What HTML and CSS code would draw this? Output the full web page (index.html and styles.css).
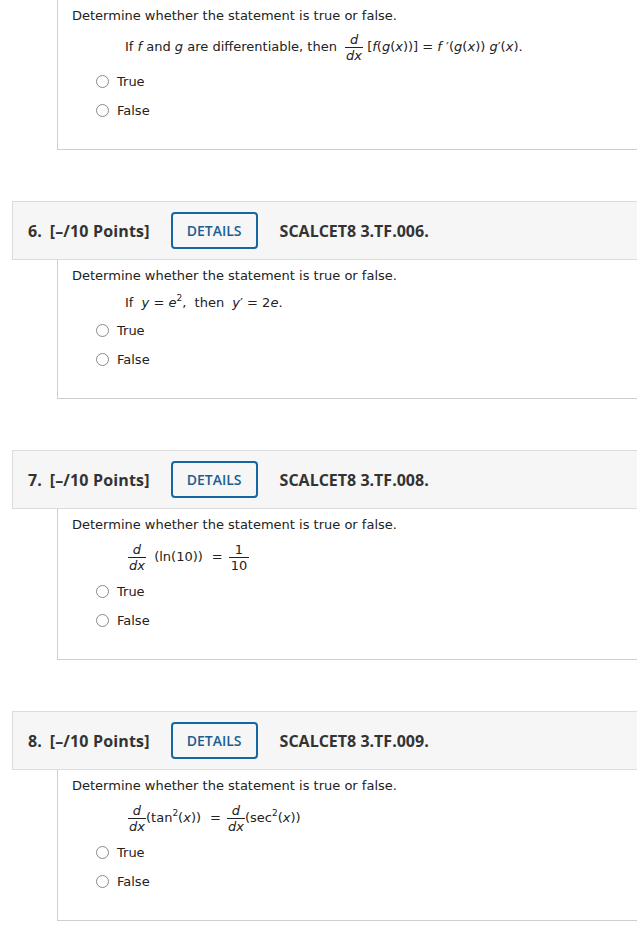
FILE: index.html
```html
<!DOCTYPE html>
<html>
<head>
<meta charset="utf-8">
<link rel="stylesheet" href="styles.css">
</head>
<body>
<div class="page">

  <section class="question first">
    <div class="qbody">
      <p class="prompt">Determine whether the statement is true or false.</p>
      <div class="statement"><span class="expr">If <i>f</i> and <i>g</i> are differentiable, then <span class="frac gap"><span class="num"><i>d</i></span><span class="den"><i>dx</i></span></span> [<i>f</i>(<i>g</i>(<i>x</i>))] = <i>f</i> ′(<i>g</i>(<i>x</i>)) <i>g</i>′(<i>x</i>).</span></div>
      <div class="options">
        <label class="opt"><span class="radio"></span>True</label>
        <label class="opt"><span class="radio"></span>False</label>
      </div>
    </div>
  </section>

  <section class="question">
    <div class="qhead">
      <span class="qnum">6.</span>
      <span class="qpts">[–/10 Points]</span>
      <button class="details">DETAILS</button>
      <span class="qcode">SCALCET8 3.TF.006.</span>
    </div>
    <div class="qbody">
      <p class="prompt">Determine whether the statement is true or false.</p>
      <div class="statement plain"><span class="expr">If<span class="sp"></span> <i>y</i> = <i>e</i><sup>2</sup>,&nbsp; then<span class="sp"></span> <i>y</i>′ = 2<i>e</i>.</span></div>
      <div class="options">
        <label class="opt"><span class="radio"></span>True</label>
        <label class="opt"><span class="radio"></span>False</label>
      </div>
    </div>
  </section>

  <section class="question">
    <div class="qhead">
      <span class="qnum">7.</span>
      <span class="qpts">[–/10 Points]</span>
      <button class="details">DETAILS</button>
      <span class="qcode">SCALCET8 3.TF.008.</span>
    </div>
    <div class="qbody">
      <p class="prompt">Determine whether the statement is true or false.</p>
      <div class="statement lower"><span class="expr"><span class="frac lead"><span class="num"><i>d</i></span><span class="den"><i>dx</i></span></span><span class="sp"></span> (ln(10))<span class="eq">=</span><span class="frac wide"><span class="num">1</span><span class="den">10</span></span></span></div>
      <div class="options">
        <label class="opt"><span class="radio"></span>True</label>
        <label class="opt"><span class="radio"></span>False</label>
      </div>
    </div>
  </section>

  <section class="question">
    <div class="qhead">
      <span class="qnum">8.</span>
      <span class="qpts">[–/10 Points]</span>
      <button class="details">DETAILS</button>
      <span class="qcode">SCALCET8 3.TF.009.</span>
    </div>
    <div class="qbody">
      <p class="prompt">Determine whether the statement is true or false.</p>
      <div class="statement lower"><span class="expr"><span class="frac lead"><span class="num"><i>d</i></span><span class="den"><i>dx</i></span></span>(tan<sup>2</sup>(<i>x</i>))<span class="eq">=</span><span class="frac"><span class="num"><i>d</i></span><span class="den"><i>dx</i></span></span>(sec<sup>2</sup>(<i>x</i>))</span></div>
      <div class="options">
        <label class="opt"><span class="radio"></span>True</label>
        <label class="opt"><span class="radio"></span>False</label>
      </div>
    </div>
  </section>

</div>
</body>
</html>
```

FILE: styles.css
```css
html, body {
  margin: 0;
  padding: 0;
  background: #ffffff;
  overflow: hidden;
}

body {
  font-family: "DejaVu Sans", Verdana, sans-serif;
  color: #222222;
}

.page {
  width: 100%;
}

.question {
  margin-bottom: 51px;
}

.qhead {
  margin-left: 12px;
  height: 59px;
  box-sizing: border-box;
  background: #f6f6f6;
  border: 1px solid #dcdcdc;
  border-right: none;
  display: flex;
  align-items: center;
  padding-left: 15px;
  font-family: "Open Sans", "Noto Sans", sans-serif;
  font-weight: 700;
  font-size: 16px;
  color: #333333;
}

.qnum {
  margin-right: 8px;
}

.qpts {
  margin-right: 21px;
  letter-spacing: 0.15px;
}

.details {
  width: 87px;
  height: 37px;
  box-sizing: border-box;
  border: 2px solid #1467a0;
  border-radius: 4px;
  background: #f6f6f6;
  color: #1b5f91;
  font-family: "Open Sans", "Noto Sans", sans-serif;
  font-weight: 600;
  font-size: 14px;
  padding: 0;
  margin-right: 22px;
}

.qbody {
  margin-left: 57px;
  border-left: 1px solid #cfcfcf;
  border-bottom: 1px solid #cfcfcf;
  padding: 7px 0 24px 14px;
  font-size: 13px;
}

.prompt {
  margin: 0;
  line-height: 18px;
}

.statement {
  margin: 4px 0 2px 53px;
  display: flex;
  align-items: center;
  height: 36px;
}

.statement.lower {
  margin-top: 5px;
}

.statement.plain {
  height: 18px;
  margin-top: 9px;
  margin-bottom: 4px;
}

.expr {
  white-space: nowrap;
  line-height: 18px;
}

.expr i {
  font-style: italic;
}

.sp {
  display: inline-block;
  width: 4px;
}

.eq {
  margin: 0 6px 0 9px;
}

sup {
  font-size: 9px;
  line-height: 0;
  vertical-align: 6px;
}

.frac {
  display: inline-flex;
  flex-direction: column;
  align-items: center;
  vertical-align: middle;
  line-height: 15px;
  min-width: 18px;
}

.frac.gap {
  margin-left: 4px;
}

.frac.lead {
  margin-left: 3px;
}

.frac .num {
  border-bottom: 1px solid #222222;
  padding: 0 1px;
  align-self: stretch;
  text-align: center;
}

.frac .den {
  padding: 0 1px;
}

.frac.wide .num,
.frac.wide .den {
  padding: 0 2px;
}

.options {
  display: flex;
  flex-direction: column;
}

.opt {
  display: flex;
  align-items: center;
  height: 29px;
  padding-left: 24px;
}

.radio {
  width: 11px;
  height: 11px;
  border: 1px solid #8a8a8a;
  border-radius: 50%;
  background: #fff;
  margin-right: 8px;
}
```
